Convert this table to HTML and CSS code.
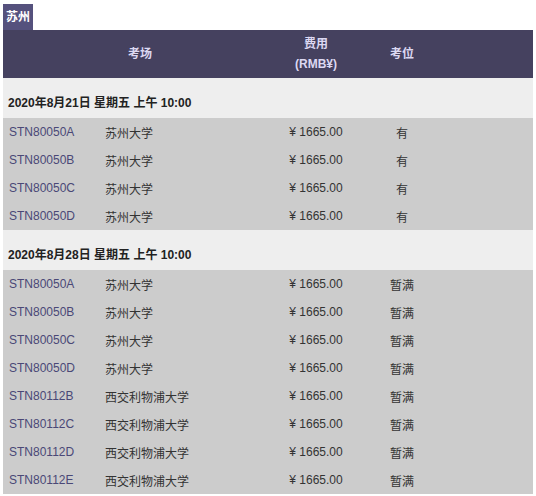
FILE: index.html
```html
<!DOCTYPE html>
<html lang="zh">
<head>
<meta charset="utf-8">
<link rel="stylesheet" href="styles.css">
</head>
<body>
<div class="page">
  <div class="tab">苏州</div>
  <div class="table">
    <div class="row head">
      <div class="c span2">考场</div>
      <div class="c">费用<br>(RMB¥)</div>
      <div class="c">考位</div>
      <div class="c"></div>
    </div>
    <div class="date">2020年8月21日 星期五 上午 10:00</div>
    <div class="row item"><div class="code">STN80050A</div><div class="venue">苏州大学</div><div class="c">¥ 1665.00</div><div class="c">有</div><div></div></div>
    <div class="row item"><div class="code">STN80050B</div><div class="venue">苏州大学</div><div class="c">¥ 1665.00</div><div class="c">有</div><div></div></div>
    <div class="row item"><div class="code">STN80050C</div><div class="venue">苏州大学</div><div class="c">¥ 1665.00</div><div class="c">有</div><div></div></div>
    <div class="row item"><div class="code">STN80050D</div><div class="venue">苏州大学</div><div class="c">¥ 1665.00</div><div class="c">有</div><div></div></div>
    <div class="date">2020年8月28日 星期五 上午 10:00</div>
    <div class="row item"><div class="code">STN80050A</div><div class="venue">苏州大学</div><div class="c">¥ 1665.00</div><div class="c">暂满</div><div></div></div>
    <div class="row item"><div class="code">STN80050B</div><div class="venue">苏州大学</div><div class="c">¥ 1665.00</div><div class="c">暂满</div><div></div></div>
    <div class="row item"><div class="code">STN80050C</div><div class="venue">苏州大学</div><div class="c">¥ 1665.00</div><div class="c">暂满</div><div></div></div>
    <div class="row item"><div class="code">STN80050D</div><div class="venue">苏州大学</div><div class="c">¥ 1665.00</div><div class="c">暂满</div><div></div></div>
    <div class="row item"><div class="code">STN80112B</div><div class="venue">西交利物浦大学</div><div class="c">¥ 1665.00</div><div class="c">暂满</div><div></div></div>
    <div class="row item"><div class="code">STN80112C</div><div class="venue">西交利物浦大学</div><div class="c">¥ 1665.00</div><div class="c">暂满</div><div></div></div>
    <div class="row item"><div class="code">STN80112D</div><div class="venue">西交利物浦大学</div><div class="c">¥ 1665.00</div><div class="c">暂满</div><div></div></div>
    <div class="row item"><div class="code">STN80112E</div><div class="venue">西交利物浦大学</div><div class="c">¥ 1665.00</div><div class="c">暂满</div><div></div></div>
  </div>
</div>
</body>
</html>
```

FILE: styles.css
```css
html, body {
  margin: 0;
  padding: 0;
  background: #ffffff;
}
body {
  font-family: "Liberation Sans", "Noto Sans CJK SC", sans-serif;
  font-size: 12px;
  color: #333333;
}
.page {
  padding: 4px 3px 0 3px;
}
.tab {
  display: inline-block;
  background: #55517d;
  color: #ffffff;
  font-weight: bold;
  font-size: 12px;
  height: 26px;
  line-height: 26px;
  padding: 0 3px;
  width: 24px;
}
.table {
  width: 530px;
}
.row {
  display: grid;
  grid-template-columns: 97px 177px 78px 94px 1fr;
  align-items: center;
}
.head {
  background: #45415f;
  color: #dcd8f2;
  font-weight: bold;
  height: 48px;
  line-height: 20px;
}
.span2 {
  grid-column: span 2;
}
.c {
  text-align: center;
}
.date {
  background: #eeeeee;
  height: 40px;
  line-height: 50px;
  padding-left: 5px;
  font-weight: bold;
  color: #222222;
  overflow: hidden;
}
.item {
  background: #cccccc;
  height: 28px;
}
.code {
  padding-left: 6px;
  color: #4a4877;
}
.venue {
  padding-left: 5px;
  color: #333333;
  white-space: nowrap;
}
```
